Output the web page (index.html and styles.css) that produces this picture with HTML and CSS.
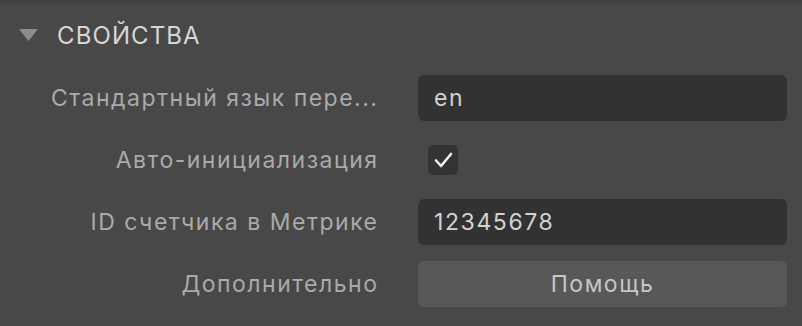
FILE: index.html
```html
<!DOCTYPE html>
<html lang="ru">
<head>
<meta charset="utf-8">
<link rel="stylesheet" href="styles.css">
</head>
<body>
<div class="panel">
  <div class="section-head">
    <svg class="caret" width="19" height="12" viewBox="0 0 19 12"><polygon points="0,0 19,0 9.5,12" fill="#8c8c8c"/></svg>
    <span class="section-title">СВОЙСТВА</span>
  </div>
  <div class="props">
    <div class="row">
      <div class="label">Стандартный язык пере...</div>
      <div class="control"><div class="field">en</div></div>
    </div>
    <div class="row">
      <div class="label">Авто-инициализация</div>
      <div class="control">
        <div class="checkbox">
          <svg width="30" height="30" viewBox="0 0 30 30"><polyline points="8,15.5 13,21 23,9" fill="none" stroke="#f2f2f2" stroke-width="2.6" stroke-linecap="round" stroke-linejoin="round"/></svg>
        </div>
      </div>
    </div>
    <div class="row">
      <div class="label">ID счетчика в Метрике</div>
      <div class="control"><div class="field">12345678</div></div>
    </div>
    <div class="row">
      <div class="label">Дополнительно</div>
      <div class="control"><div class="button">Помощь</div></div>
    </div>
  </div>
</div>
</body>
</html>
```
FILE: styles.css
```css
html, body {
  margin: 0;
  padding: 0;
  background: #484848;
}
body {
  width: 802px;
  height: 326px;
  overflow: hidden;
  font-family: Inter, "Liberation Sans", Arial, sans-serif;
}
.panel {
  height: 326px;
  box-sizing: border-box;
  border-top: 4px solid #434343;
  padding: 0 15px 0 0;
}
.section-head {
  display: flex;
  align-items: center;
  height: 62px;
  padding-left: 19px;
}
.caret {
  display: block;
  margin-top: -1px;
}
.section-title {
  margin-left: 19px;
  font-size: 24px;
  letter-spacing: 1.1px;
  color: #d6d6d6;
}
.props {
  display: flex;
  flex-direction: column;
  gap: 16px;
  padding-top: 9px;
}
.row {
  display: flex;
  align-items: center;
  height: 46px;
}
.label {
  width: 378.5px;
  flex: none;
  text-align: right;
  font-size: 23px;
  letter-spacing: 1.5px;
  color: #aaaaaa;
  white-space: nowrap;
}
.control {
  margin-left: 39.5px;
  flex: 1;
  display: flex;
  align-items: center;
  height: 100%;
}
.field {
  flex: 1;
  height: 46px;
  box-sizing: border-box;
  background: #323232;
  border-radius: 6px;
  padding-left: 16px;
  display: flex;
  align-items: center;
  font-size: 23px;
  letter-spacing: 1.6px;
  color: #d2d2d2;
}
.checkbox {
  margin-left: 10px;
  width: 30px;
  height: 30px;
  background: #333333;
  border-radius: 5px;
}
.checkbox svg {
  display: block;
}
.button {
  flex: 1;
  height: 46px;
  background: #585858;
  border-radius: 6px;
  display: flex;
  align-items: center;
  justify-content: center;
  font-size: 23px;
  letter-spacing: 1.5px;
  color: #c6c6c6;
}
```
